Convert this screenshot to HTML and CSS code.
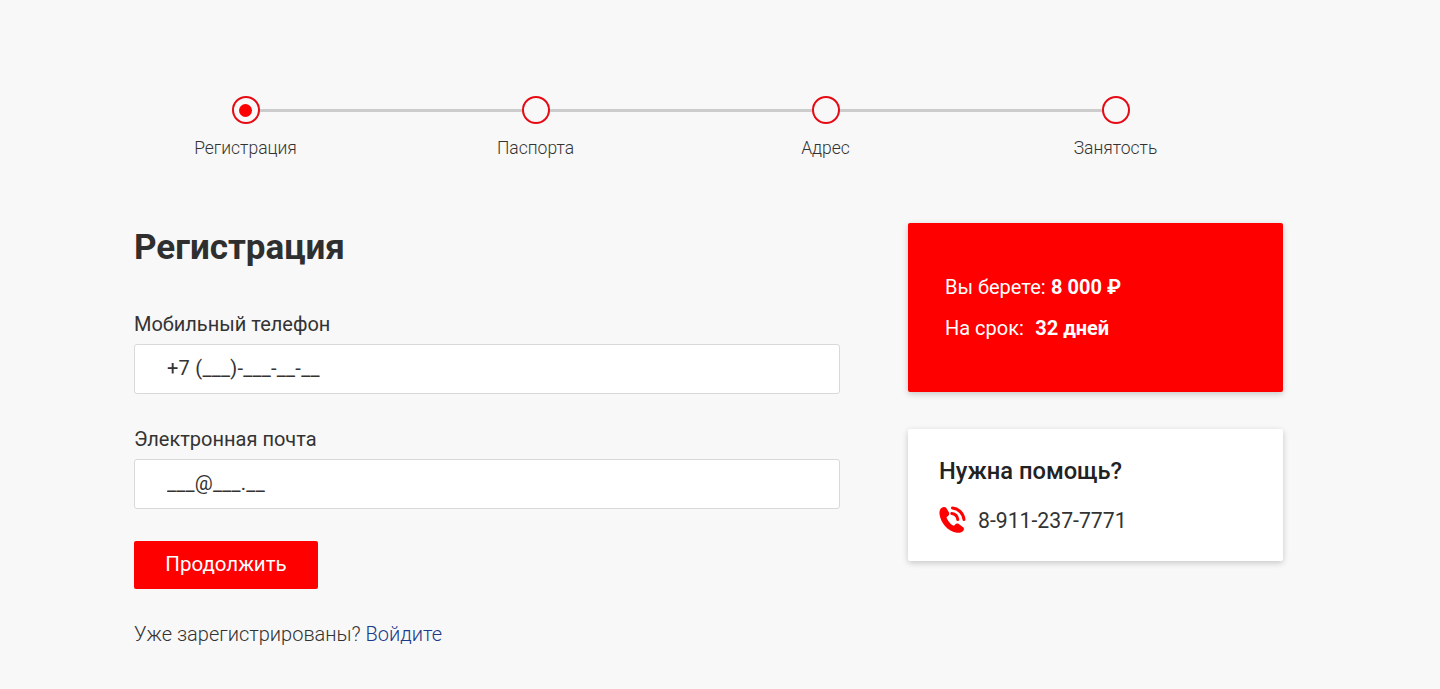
FILE: index.html
```html
<!DOCTYPE html>
<html lang="ru">
<head>
    <meta charset="UTF-8">
    <title>Регистрация</title>
    <link rel="stylesheet" href="styles.css">
</head>
<body>
    <div class="steps">
        <div class="step step-active">
            <div class="step-dot"></div>
            <div class="step-label">Регистрация</div>
        </div>
        <div class="step">
            <div class="step-dot"></div>
            <div class="step-label">Паспорта</div>
        </div>
        <div class="step">
            <div class="step-dot"></div>
            <div class="step-label">Адрес</div>
        </div>
        <div class="step step-last">
            <div class="step-dot"></div>
            <div class="step-label">Занятость</div>
        </div>
    </div>

    <div class="content">
        <form class="form">
            <h1>Регистрация</h1>
            <label class="field-label" for="phone">Мобильный телефон</label>
            <input class="field" id="phone" type="text" placeholder="+7 (___)-___-__-__">
            <label class="field-label" for="email">Электронная почта</label>
            <input class="field" id="email" type="text" placeholder="___@___.__">
            <button class="btn" type="button">Продолжить</button>
            <p class="login-note">Уже зарегистрированы? <a href="#">Войдите</a></p>
        </form>

        <aside class="sidebar">
            <div class="card card-red">
                <p>Вы берете: <b>8 000 ₽</b></p>
                <p>На срок:&nbsp; <b>32 дней</b></p>
            </div>
            <div class="card card-help">
                <h2>Нужна помощь?</h2>
                <div class="help-phone">
                    <svg class="phone-icon" viewBox="0 0 27 28" width="27" height="28">
                        <path d="M2.500 2C1 3 .3 5 .5 8c1 9 8.500 17.500 17.500 18.800 3 .2 5.500-.8 6.500-2.300.8-1.500.5-2.700-.7-3.500l-4-3c-1.300-.8-2.600-.6-3.600.5L15 19.800c-3.500-1.300-6.500-5.300-7.500-8.600L9 10c1.300-1 1.500-2.200 1-3.500L7.500 2.200C6.500.8 4 .8 2.500 2z" fill="#ff0000"/>
                        <path d="M13.500 2c6 .6 10.800 5.300 11.500 11.500" fill="none" stroke="#ff0000" stroke-width="3" stroke-linecap="round"/>
                        <path d="M12.800 7.500c3.200.4 5.600 2.800 6 6" fill="none" stroke="#ff0000" stroke-width="3" stroke-linecap="round"/>
                    </svg>
                    <span>8-911-237-7771</span>
                </div>
            </div>
        </aside>
    </div>
</body>
</html>
```
FILE: styles.css
```css
* {
    margin: 0;
    padding: 0;
    box-sizing: border-box;
}

body {
    font-family: Roboto, "Liberation Sans", sans-serif;
    background: #f8f8f8;
    color: #333333;
    height: 689px;
    overflow: hidden;
}

/* Steps */
.steps {
    display: flex;
    width: 1160px;
    margin-left: 100.5px;
    padding-top: 96px;
}

.step {
    position: relative;
    width: 290px;
    display: flex;
    flex-direction: column;
    align-items: center;
}

.step::after {
    content: "";
    position: absolute;
    top: 13px;
    left: 145px;
    width: 290px;
    height: 3px;
    background: #cccccc;
}

.step-last::after {
    display: none;
}

.step-dot {
    position: relative;
    z-index: 1;
    width: 28px;
    height: 28px;
    border: 2px solid #e60a14;
    border-radius: 50%;
    background: #f8f8f8;
    display: flex;
    align-items: center;
    justify-content: center;
}

.step-active .step-dot::before {
    content: "";
    width: 13px;
    height: 13px;
    border-radius: 50%;
    background: #ff0000;
}

.step-label {
    margin-top: 13px;
    font-size: 17.5px;
    font-weight: 300;
    line-height: 22px;
    color: #333333;
}

/* Main content */
.content {
    display: flex;
    align-items: flex-start;
    margin-left: 134px;
    margin-top: 64px;
}

.form {
    width: 706px;
    margin-right: 68px;
}

h1 {
    font-size: 35px;
    font-weight: 700;
    line-height: 40px;
    margin-top: 5px;
    margin-bottom: 45px;
    color: #2f2f2f;
}

.field-label {
    display: block;
    font-size: 20px;
    line-height: 22px;
    margin-bottom: 9px;
    color: #333333;
}

.field {
    display: block;
    width: 100%;
    height: 50px;
    padding: 0 32px 2px;
    margin-bottom: 34px;
    border: 1px solid #d9d9d9;
    border-radius: 3px;
    background: #ffffff;
    font-family: inherit;
    font-size: 20px;
    letter-spacing: 0.25px;
    color: #333333;
}

.field::placeholder {
    color: #333333;
    opacity: 1;
}

.btn {
    display: block;
    width: 184px;
    height: 48px;
    margin-top: -2px;
    padding-bottom: 2px;
    border: none;
    border-radius: 2px;
    background: #ff0000;
    color: #ffffff;
    font-family: inherit;
    font-size: 20.5px;
    cursor: pointer;
}

.login-note {
    margin-top: 34px;
    font-size: 20px;
    font-weight: 300;
    line-height: 22px;
}

.login-note a {
    color: #1a3a8a;
    text-decoration: none;
}

/* Sidebar */
.sidebar {
    width: 375px;
}

.card {
    border-radius: 2px;
    box-shadow: 0 2px 6px rgba(0, 0, 0, 0.2);
}

.card-red {
    height: 169px;
    padding: 50px 37px 0;
    background: #ff0000;
    color: #ffffff;
    font-size: 20px;
    line-height: 28px;
}

.card-red p {
    margin-bottom: 13px;
}

.card-red b {
    margin-left: 0.5px;
}

.card-red p + p b {
    margin-left: 1.5px;
}

.card-help {
    height: 132px;
    margin-top: 37px;
    padding: 28px 31px 0;
    background: #ffffff;
}

h2 {
    font-size: 23.7px;
    font-weight: 500;
    line-height: 28px;
    color: #222222;
}

.help-phone {
    display: flex;
    align-items: center;
    margin-top: 21px;
    font-size: 21.2px;
    color: #333333;
}

.phone-icon {
    margin-right: 12px;
}
```
